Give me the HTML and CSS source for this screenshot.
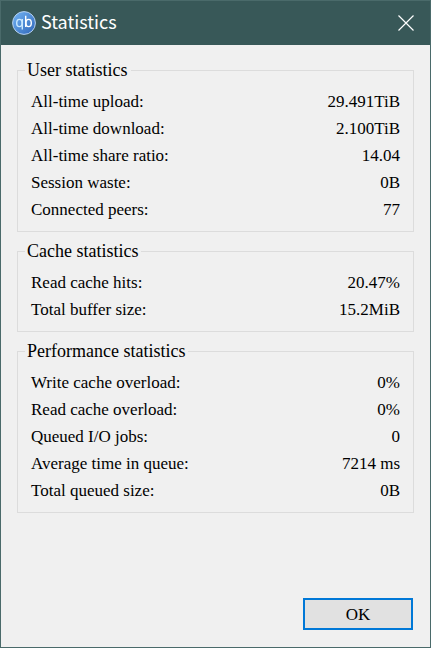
FILE: index.html
```html
<!DOCTYPE html>
<html lang="en">
<head>
    <meta charset="UTF-8">
    <meta name="viewport" content="width=device-width, initial-scale=1.0">
    <title>Statistics</title>
    <link rel="stylesheet" href="styles.css">
</head>
<body>
    <div class="dialog">
        <header class="titlebar">
            <svg class="logo" viewBox="0 0 24 24" aria-hidden="true">
                <defs>
                    <linearGradient id="disc" x1="0" y1="0" x2="1" y2="1">
                        <stop offset="0" stop-color="#72b4f5"/>
                        <stop offset="1" stop-color="#2f66b8"/>
                    </linearGradient>
                </defs>
                <circle cx="12" cy="12" r="11.4" fill="url(#disc)" stroke="#b5d0ee" stroke-width="1"/>
                <g fill="none" stroke-width="1.4">
                    <ellipse cx="7.4" cy="12" rx="2.7" ry="3.6" stroke="#c8e8ff"/>
                    <path d="M10.3 8V18.6" stroke="#c8e8ff"/>
                    <path d="M13.7 4.8V16" stroke="#fff"/>
                    <ellipse cx="16.6" cy="12" rx="2.7" ry="3.6" stroke="#fff"/>
                </g>
            </svg>
            <h1 class="title">Statistics</h1>
            <button class="close" type="button" aria-label="Close">
                <svg viewBox="0 0 16 16" aria-hidden="true">
                    <path d="M.5 .5L15.5 15.5M15.5 .5L.5 15.5" fill="none" stroke="#fff" stroke-width="1.2"/>
                </svg>
            </button>
        </header>
        <main class="content">
            <fieldset class="group">
                <legend>User statistics</legend>
                <table>
                    <tr><th scope="row">All-time upload:</th><td>29.491TiB</td></tr>
                    <tr><th scope="row">All-time download:</th><td>2.100TiB</td></tr>
                    <tr><th scope="row">All-time share ratio:</th><td>14.04</td></tr>
                    <tr><th scope="row">Session waste:</th><td>0B</td></tr>
                    <tr><th scope="row">Connected peers:</th><td>77</td></tr>
                </table>
            </fieldset>
            <fieldset class="group">
                <legend>Cache statistics</legend>
                <table>
                    <tr><th scope="row">Read cache hits:</th><td>20.47%</td></tr>
                    <tr><th scope="row">Total buffer size:</th><td>15.2MiB</td></tr>
                </table>
            </fieldset>
            <fieldset class="group">
                <legend>Performance statistics</legend>
                <table>
                    <tr><th scope="row">Write cache overload:</th><td>0%</td></tr>
                    <tr><th scope="row">Read cache overload:</th><td>0%</td></tr>
                    <tr><th scope="row">Queued I/O jobs:</th><td>0</td></tr>
                    <tr><th scope="row">Average time in queue:</th><td>7214 ms</td></tr>
                    <tr><th scope="row">Total queued size:</th><td>0B</td></tr>
                </table>
            </fieldset>
        </main>
        <footer class="buttons">
            <button class="ok" type="button">OK</button>
        </footer>
    </div>
</body>
</html>
```
FILE: styles.css
```css
*{
    box-sizing: border-box;
}
body{
    margin: 0;
    font-family: "Liberation Serif", "Times New Roman", serif;
    font-size: 17px;
    line-height: 27px;
    color: #000000;
}
.dialog{
    min-height: 100vh;
    display: flex;
    flex-direction: column;
    border: 1px solid #4a6a6a;
    background-color: #f0f0f0;
}
.titlebar{
    height: 44px;
    display: flex;
    align-items: center;
    padding: 0 16px 0 11px;
    background-color: #385858;
    color: #ffffff;
}
.logo{
    width: 24px;
    height: 24px;
}
.title{
    flex: 1;
    margin: 0 0 0 5px;
    padding-bottom: 4px;
    font-family: "Noto Sans CJK TC", "Noto Sans", sans-serif;
    font-size: 18px;
    font-weight: 400;
}
.close{
    display: flex;
    padding: 0;
    border: 0;
    background: none;
}
.close svg{
    width: 16px;
    height: 16px;
}
.content{
    flex: 1;
    display: flex;
    flex-direction: column;
    gap: 6px;
    padding: 12px 16px;
}
.group{
    margin: 0;
    padding: 4px 13px 8px;
    border: 1px solid #dcdcdc;
}
/* pull the caption left of the rows */
.group legend{
    margin-left: -6px;
    padding: 0 3px 0 2px;
    font-size: 18px;
}
table{
    width: 100%;
    border-collapse: collapse;
}
th, td{
    padding: 0;
    font-weight: 400;
    text-align: left;
}
td{
    text-align: right;
}
.buttons{
    display: flex;
    justify-content: flex-end;
    padding: 0 17px 17px;
}
.ok{
    width: 110px;
    height: 32px;
    padding: 0;
    border: 2px solid #0078d7;
    background-color: #e1e1e1;
    color: #000000;
    font: inherit;
}
```
